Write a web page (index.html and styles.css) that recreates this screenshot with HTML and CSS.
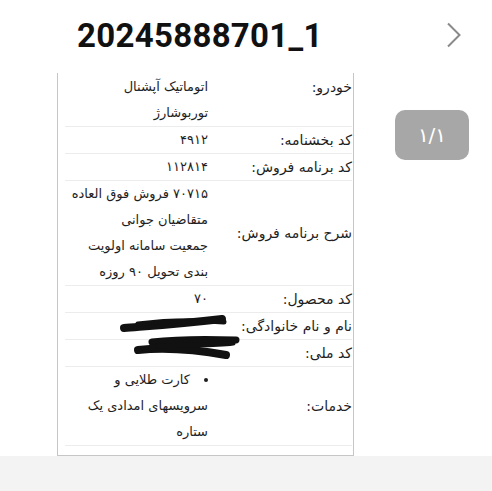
FILE: index.html
```html
<!DOCTYPE html>
<html lang="fa">
<head>
<meta charset="utf-8">
<link rel="stylesheet" href="styles.css">
</head>
<body>
<header class="top">
  <h1 class="title">20245888701_1</h1>
  <svg class="chevron" width="16" height="26" viewBox="0 0 16 26"><path d="M2 1.5 L13.5 13 L2 24.5" fill="none" stroke="#8a8a8a" stroke-width="2"/></svg>
</header>
<main class="content">
  <section class="card">
    <table class="info" dir="rtl">
      <tr>
        <td class="label top-label">خودرو:</td>
        <td class="value">اتوماتیک آپشنال<br>توربوشارژ</td>
      </tr>
      <tr>
        <td class="label">کد بخشنامه:</td>
        <td class="value">۴۹۱۲</td>
      </tr>
      <tr>
        <td class="label">کد برنامه فروش:</td>
        <td class="value">۱۱۲۸۱۴</td>
      </tr>
      <tr>
        <td class="label">شرح برنامه فروش:</td>
        <td class="value">۷۰۷۱۵ فروش فوق العاده<br>متقاضیان جوانی<br>جمعیت سامانه اولویت<br>بندی تحویل ۹۰ روزه</td>
      </tr>
      <tr>
        <td class="label">کد محصول:</td>
        <td class="value">۷۰</td>
      </tr>
      <tr>
        <td class="label">نام و نام خانوادگی:</td>
        <td class="value"></td>
      </tr>
      <tr>
        <td class="label">کد ملی:</td>
        <td class="value"></td>
      </tr>
      <tr>
        <td class="label">خدمات:</td>
        <td class="value"><ul class="services"><li>کارت طلایی و<br>سرویسهای امدادی یک<br>ستاره</li></ul></td>
      </tr>
    </table>
    <svg class="redact" width="130" height="50" viewBox="0 0 130 50">
      <path d="M6 14 C30 12 60 10 104 5" fill="none" stroke="#111" stroke-width="8" stroke-linecap="round"/>
      <path d="M20 10 C50 6 80 6 106 8" fill="none" stroke="#111" stroke-width="5" stroke-linecap="round"/>
      <path d="M34 28 C60 25 90 25 118 26" fill="none" stroke="#111" stroke-width="7" stroke-linecap="round"/>
      <path d="M20 36 C50 33 80 36 108 41" fill="none" stroke="#111" stroke-width="8" stroke-linecap="round"/>
      <path d="M40 32 C70 30 95 32 115 29" fill="none" stroke="#111" stroke-width="5" stroke-linecap="round"/>
    </svg>
  </section>
  <div class="pager">۱/۱</div>
</main>
<footer class="bottom"></footer>
</body>
</html>
```
FILE: styles.css
```css
* { box-sizing: border-box; }
html, body { margin: 0; padding: 0; background: #fff; }
body { width: 492px; height: 491px; overflow: hidden; font-family: "DejaVu Sans", sans-serif; color: #1e1e1e; }

.top {
  height: 73px;
  display: flex;
  align-items: flex-start;
}
.title {
  margin: 14px 0 0 77px;
  font-family: Roboto, "Liberation Sans", sans-serif;
  font-weight: 700;
  font-size: 33px;
  line-height: 44px;
  color: #111;
  letter-spacing: 0.3px;
}
.chevron {
  margin: 22px 0 0 auto;
  margin-right: 30px;
}

.content {
  height: 383px;
  display: flex;
  align-items: flex-start;
  overflow: hidden;
}
.card {
  position: relative;
  margin-left: 57px;
  width: 297px;
  height: 383px;
  border: 1px solid #c6c6c6;
  border-top: none;
  padding: 1px 1px 0 7px;
}
.info {
  width: 100%;
  border-collapse: collapse;
  font-size: 13px;
  line-height: 26px;
}
.info td {
  padding: 0;
  border-bottom: 1px solid #ececec;
  vertical-align: middle;
  text-align: right;
}
.label { width: 139px; white-space: nowrap; font-size: 14px; }
.top-label { vertical-align: top !important; }
.value { padding-right: 5px !important; }

.services {
  margin: 0;
  padding: 0;
  list-style: disc inside;
}

.redact {
  position: absolute;
  left: 60px;
  top: 241px;
}

.pager {
  margin: 37px 0 0 41px;
  width: 74px;
  height: 50px;
  border-radius: 10px;
  background: #a7a7a7;
  color: #fff;
  font-size: 20px;
  display: flex;
  align-items: center;
  justify-content: center;
}

.bottom {
  height: 35px;
  background: #f3f3f3;
}
```
